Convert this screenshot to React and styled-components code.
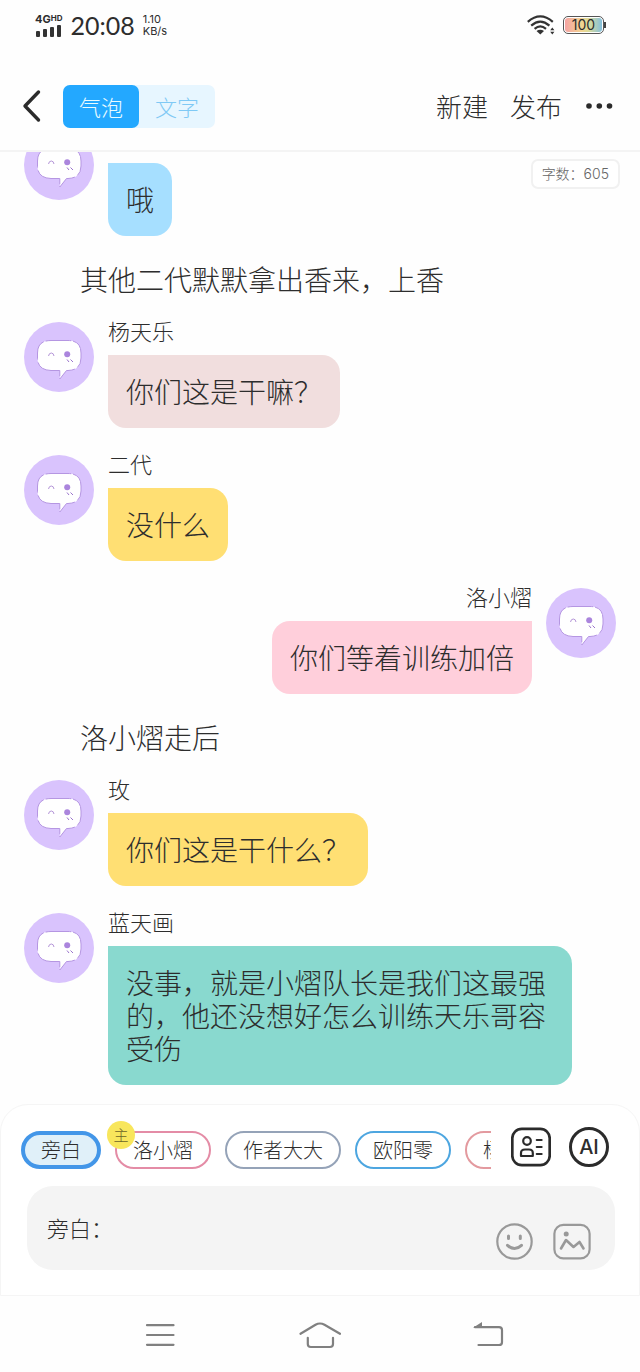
import React from 'react'
import styled, { createGlobalStyle } from 'styled-components'

const colors = {
  text: '#2d2d2d',
  primary: '#23a8ff',
  line: '#f4f4f4',
  muted: '#999999',
}

const GlobalStyle = createGlobalStyle`
  * {
    box-sizing: border-box;
  }

  body {
    margin: 0;
    background: #fefefe;
    color: ${colors.text};
    font-family: 'Noto Sans CJK SC', sans-serif;
    font-weight: 300;
  }

  button,
  textarea {
    margin: 0;
    padding: 0;
    border: none;
    background: none;
    color: inherit;
    font: inherit;
  }

  button {
    cursor: pointer;
  }

  svg {
    display: block;
  }
`

const Screen = styled.div`
  display: flex;
  flex-direction: column;
  height: 100vh;
`

/* status bar */

const StatusBar = styled.div`
  display: flex;
  align-items: center;
  justify-content: space-between;
  height: 50px;
  padding: 0 36px 0 35px;
  font-family: Lato, sans-serif;
  font-weight: 400;
`
const StatusGroup = styled.div`
  display: flex;
  align-items: center;
  gap: 8px;
`
const Signal = styled.div`
  display: flex;
  flex-direction: column;
  gap: 1px;
  font-family: Inter, sans-serif;
  font-size: 11px;
  font-weight: 700;
  line-height: 10px;

  sup {
    font-size: 8px;
    line-height: 8px;
    vertical-align: 2px;
  }
`
const Clock = styled.div`
  font-size: 25px;
  line-height: 30px;
`
const Speed = styled.div`
  font-family: Inter, sans-serif;
  font-size: 11px;
  line-height: 12px;
`
const Battery = styled.div`
  position: relative;
  width: 41px;
  height: 18px;
  border: 1px solid #555;
  border-radius: 5px;
  padding: 1px;

  &::after {
    content: '';
    position: absolute;
    top: 5px;
    right: -3px;
    width: 2px;
    height: 6px;
    background: #444;
  }
`
const Charge = styled.div`
  height: 14px;
  border-radius: 3px;
  background: linear-gradient(90deg, #f5a3a3, #f3d591 45%, #d9dc9c 65%, #84bfdc);
  font-family: Inter, sans-serif;
  font-size: 14px;
  line-height: 14px;
  text-align: center;
`

/* toolbar */

const Toolbar = styled.header`
  display: flex;
  align-items: center;
  height: 102px;
  padding: 12px 24px 0 21px;
  border-bottom: 2px solid ${colors.line};
`
const Toggle = styled.div`
  display: flex;
  margin-left: 20px;
  border-radius: 7px;
  background: #e7f6ff;
`
const ToggleButton = styled.button`
  height: 43px;
  padding: 0 16px;
  border-radius: 7px;
  background: ${(p) => (p.$active ? colors.primary : 'transparent')};
  color: ${(p) => (p.$active ? '#e9fbff' : '#7fc9f5')};
  font-size: 22px;
  line-height: 43px;
`
const Actions = styled.div`
  display: flex;
  align-items: center;
  gap: 22px;
  margin-left: auto;
  font-size: 26px;
  line-height: 34px;
`

/* messages */

const ThreadArea = styled.div`
  position: relative;
  flex: 1;
  min-height: 0;
`
const Scroller = styled.main`
  display: flex;
  flex-direction: column-reverse;
  height: 100%;
  overflow-y: auto;
  scrollbar-width: none;
`
const Thread = styled.div`
  display: flex;
  flex-direction: column;
  gap: 27px;
  padding: 0 24px 19px;
`
const WordCount = styled.div`
  position: absolute;
  top: 7px;
  right: 20px;
  padding: 0 9px;
  border: 2px solid #f1f1f1;
  border-radius: 7px;
  background: #fff;
  color: #666;
  font-family: Inter, 'Noto Sans CJK SC', sans-serif;
  font-size: 14px;
  line-height: 26px;
`
const Row = styled.div`
  display: flex;
  flex-direction: ${(p) => (p.$mine ? 'row-reverse' : 'row')};
  gap: 14px;
`
const Body = styled.div`
  display: flex;
  flex-direction: column;
  align-items: ${(p) => (p.$mine ? 'flex-end' : 'flex-start')};
  flex: 1;
  gap: 17px;
  padding-${(p) => (p.$mine ? 'left' : 'right')}: 44px;
`
const Name = styled.div`
  height: 16px;
  font-size: 22px;
  line-height: 16px;
`
const Bubble = styled.div`
  padding: 20px 18px;
  border-radius: ${(p) => (p.$mine ? '18px 0 18px 18px' : '0 18px 18px 18px')};
  background: ${(p) => p.$color};
  font-size: 28px;
  line-height: 33px;
`
const Narration = styled.p`
  margin: 0;
  padding: 0 56px;
  font-size: 28px;
  line-height: 32px;
`

/* composer */

const Composer = styled.section`
  padding: 13px 24px 25px 20px;
  border: 1px solid #f5f5f5;
  border-radius: 28px 28px 0 0;
  background: #fff;
`
const CastRow = styled.div`
  display: flex;
  align-items: center;
  gap: 18px;
`
const Cast = styled.div`
  display: flex;
  flex: 1;
  gap: 14px;
  min-width: 0;
  padding: 13px 0;
  overflow: hidden;
`
const Chip = styled.button`
  position: relative;
  flex: none;
  height: 38px;
  padding: 0 16px;
  border: ${(p) => (p.$active ? 4 : 2)}px solid ${(p) => p.$color};
  border-radius: 19px;
  background: ${(p) => (p.$active ? '#e0f0f9' : '#fff')};
  font-size: 20px;
  line-height: 1;
  white-space: nowrap;
`
const LeadBadge = styled.span`
  position: absolute;
  top: -12px;
  left: -10px;
  width: 28px;
  height: 28px;
  border-radius: 50%;
  background: #f8e65c;
  color: #6b6428;
  font-size: 15px;
  line-height: 28px;
`
const Tools = styled.div`
  display: flex;
  gap: 18px;
  margin: 0 6px 6px 2px;
`
const InputBox = styled.div`
  display: flex;
  gap: 20px;
  height: 84px;
  margin: 4px 0 0 6px;
  padding: 0 24px 0 20px;
  border-radius: 26px;
  background: #f4f4f4;
`
const LineInput = styled.textarea`
  flex: 1;
  min-width: 0;
  height: 84px;
  padding: 25px 0;
  outline: none;
  resize: none;
  font-size: 22px;
  line-height: 32px;
`
const InputTools = styled.div`
  display: flex;
  align-items: flex-end;
  gap: 20px;
  padding-bottom: 10px;
`

/* system navigation */

const NavBar = styled.nav`
  display: flex;
  height: 76px;
  padding: 2px 12.5% 0;
`
const NavButton = styled.button`
  display: flex;
  flex: 1;
  align-items: center;
  justify-content: center;
`

const Avatar = () => (
  <svg width="70" height="70" viewBox="0 0 70 70" aria-hidden="true">
    <circle cx="35" cy="35" r="35" fill="#d9c3fd" />
    <path
      d="M27 18.5H44Q57 18.5 57 31V36Q57 48 44 48.5H42.5L35.8 57V48.5H27Q13.5 48 13.5 36V31Q13.5 18.5 27 18.5Z"
      fill="#fff"
      stroke="#b596e2"
      strokeWidth="1"
      strokeDasharray="20 2 31 3"
    />
    <path d="M24.5 34Q25 31 27.3 31T30 34" fill="none" stroke="#b596d8" strokeWidth="1" />
    <circle cx="43.2" cy="32.3" r="3" fill="#ab85dd" />
    <path d="M43 37.5L45 40M46.5 37.5L49 40" stroke="#9a74cc" strokeWidth="1" />
  </svg>
)

const BackIcon = () => (
  <svg width="22" height="34" viewBox="0 0 22 34" fill="none">
    <path
      d="M17.5 3L4 17L17.5 31"
      stroke="#2b2b2b"
      strokeWidth="3.4"
      strokeLinecap="round"
      strokeLinejoin="round"
    />
  </svg>
)

const MoreIcon = () => (
  <svg width="32" height="8" viewBox="0 0 32 8" fill="#2b2b2b">
    <circle cx="5" cy="4" r="2.8" />
    <circle cx="15.3" cy="4" r="2.8" />
    <circle cx="25.5" cy="4" r="2.8" />
  </svg>
)

const SignalBars = () => (
  <svg width="27" height="12" viewBox="0 0 27 12" fill="#333">
    <rect x="1" y="6" width="4" height="6" rx="1" />
    <rect x="8" y="4" width="4" height="8" rx="1" />
    <rect x="15" y="2" width="4" height="10" rx="1" />
    <rect x="22" y="0" width="4" height="12" rx="1" />
  </svg>
)

const WifiIcon = () => (
  <svg width="28" height="20" viewBox="0 0 28 20" fill="none" stroke="#333" strokeWidth="2.2">
    <path d="M.8 6.8Q13.3-4 25.8 6.8" />
    <path d="M4.2 10.6Q13.3 2.5 22.4 10.6" />
    <path d="M7.6 13.8Q13.3 9 19 13.8" />
    <path d="M9.5 16Q13.3 13.4 17 16L13.3 19.6Z" fill="#333" stroke="none" />
    <path d="M23.2 15.2L25.3 12.4L27.4 15.2ZM23.2 16.8L25.3 19.6L27.4 16.8Z" fill="#333" stroke="none" />
  </svg>
)

const CastIcon = () => (
  <svg width="40" height="40" viewBox="0 0 40 40" fill="none" stroke="#2b2b2b" strokeWidth="2.2">
    <rect x="1.3" y="1.8" width="37.4" height="36.4" rx="9.5" strokeWidth="2.7" />
    <circle cx="16" cy="14" r="3.8" />
    <path d="M10 29V26Q10 22.5 14 22.5H18Q21.8 22.5 21.8 26V29Z" strokeLinejoin="round" />
    <path d="M25.8 13H30.6M25.8 20H30.6M25.8 27H30.6" strokeLinecap="round" />
  </svg>
)

const AiButton = styled.button`
  width: 40px;
  height: 40px;
  border: 3px solid #2b2b2b;
  border-radius: 50%;
  font-family: Inter, sans-serif;
  font-size: 20px;
  font-weight: 500;
  line-height: 34px;
`

const SmileIcon = () => (
  <svg width="37" height="37" viewBox="0 0 37 37" fill="none" stroke={colors.muted} strokeLinecap="round">
    <circle cx="18.5" cy="18.5" r="17.2" strokeWidth="2.2" />
    <path d="M12.5 13V15.5M24.3 13V15.5" strokeWidth="3" />
    <path d="M11.5 22.3Q18.5 28.7 25.5 22.3" strokeWidth="3" />
  </svg>
)

const PictureIcon = () => (
  <svg width="38" height="37" viewBox="0 0 38 37" fill="none" stroke={colors.muted}>
    <rect x="1.4" y="1.8" width="35.2" height="33.6" rx="9" strokeWidth="2.2" />
    <circle cx="13.2" cy="11" r="2.5" fill={colors.muted} stroke="none" />
    <path
      d="M8 25.5L13 17L20.5 24L26.5 19L30.5 25.5"
      strokeWidth="2.6"
      strokeLinecap="round"
      strokeLinejoin="round"
    />
  </svg>
)

const MenuIcon = () => (
  <svg width="30" height="26" viewBox="0 0 30 26" stroke="#808080" strokeWidth="2.2" strokeLinecap="round">
    <path d="M2 3.2H28.5M2 13H28.5M2 22.8H28.5" />
  </svg>
)

const HomeIcon = () => (
  <svg width="42" height="28" viewBox="0 0 42 28" fill="none" stroke="#808080" strokeWidth="2.2" strokeLinecap="round">
    <path d="M1.5 12.8L16.5 3.8Q21 1.2 25.5 3.8L41 12.8" />
    <path d="M8.8 16.8V23Q8.8 26 11.8 26H31Q34 26 34 23V16.8" />
  </svg>
)

const ReturnIcon = () => (
  <svg width="48" height="26" viewBox="0 0 48 26" fill="none" stroke="#808080" strokeWidth="2.2" strokeLinecap="round">
    <path d="M19 5.2H43Q46 5.2 46 8V20.2Q46 23 43 23H22.5" />
    <path d="M17 5.8L26 0V5.8Z" fill="#808080" stroke="none" />
  </svg>
)

const messages = [
  { color: '#a6dfff', text: '哦' },
  { narration: true, text: '其他二代默默拿出香来，上香' },
  { name: '杨天乐', color: '#f1dede', text: '你们这是干嘛？' },
  { name: '二代', color: '#ffdf73', text: '没什么' },
  { name: '洛小熠', color: '#ffcfdb', text: '你们等着训练加倍', mine: true },
  { narration: true, text: '洛小熠走后' },
  { name: '玫', color: '#ffdf73', text: '你们这是干什么？' },
  {
    name: '蓝天画',
    color: '#89d9cf',
    text: '没事，就是小熠队长是我们这最强的，他还没想好怎么训练天乐哥容受伤',
  },
]

const cast = [
  { name: '旁白', color: '#4396e8', active: true },
  { name: '洛小熠', color: '#e48ca6', lead: true },
  { name: '作者大大', color: '#95a3b8' },
  { name: '欧阳零', color: '#4da6e0' },
  { name: '杨天乐', color: '#e39a9f' },
]

const Message = ({ name, color, text, mine }) => (
  <Row $mine={mine}>
    <Avatar />
    <Body $mine={mine}>
      <Name>{name}</Name>
      <Bubble $mine={mine} $color={color}>
        {text}
      </Bubble>
    </Body>
  </Row>
)

const App = () => {
  return (
    <Screen>
      <GlobalStyle />
      <StatusBar>
        <StatusGroup>
          <Signal>
            <div>
              4G<sup>HD</sup>
            </div>
            <SignalBars />
          </Signal>
          <Clock>20:08</Clock>
          <Speed>
            <div>1.10</div>
            <div>KB/s</div>
          </Speed>
        </StatusGroup>
        <StatusGroup>
          <WifiIcon />
          <Battery>
            <Charge>100</Charge>
          </Battery>
        </StatusGroup>
      </StatusBar>
      <Toolbar>
        <button aria-label="返回">
          <BackIcon />
        </button>
        <Toggle>
          <ToggleButton $active>气泡</ToggleButton>
          <ToggleButton>文字</ToggleButton>
        </Toggle>
        <Actions>
          <button>新建</button>
          <button>发布</button>
          <button aria-label="更多">
            <MoreIcon />
          </button>
        </Actions>
      </Toolbar>
      <ThreadArea>
        <Scroller>
          <Thread>
            {messages.map((item, i) =>
              item.narration ? (
                <Narration key={i}>{item.text}</Narration>
              ) : (
                <Message key={i} {...item} />
              )
            )}
          </Thread>
        </Scroller>
        <WordCount>字数：605</WordCount>
      </ThreadArea>
      <Composer>
        <CastRow>
          <Cast>
            {cast.map((role) => (
              <Chip key={role.name} $color={role.color} $active={role.active}>
                {role.name}
                {role.lead && <LeadBadge>主</LeadBadge>}
              </Chip>
            ))}
          </Cast>
          <Tools>
            <button aria-label="角色">
              <CastIcon />
            </button>
            <AiButton>AI</AiButton>
          </Tools>
        </CastRow>
        <InputBox>
          <LineInput aria-label="台词" defaultValue="旁白：" />
          <InputTools>
            <button aria-label="表情">
              <SmileIcon />
            </button>
            <button aria-label="图片">
              <PictureIcon />
            </button>
          </InputTools>
        </InputBox>
      </Composer>
      <NavBar>
        <NavButton aria-label="菜单">
          <MenuIcon />
        </NavButton>
        <NavButton aria-label="主页">
          <HomeIcon />
        </NavButton>
        <NavButton aria-label="后退">
          <ReturnIcon />
        </NavButton>
      </NavBar>
    </Screen>
  )
}

export default App
